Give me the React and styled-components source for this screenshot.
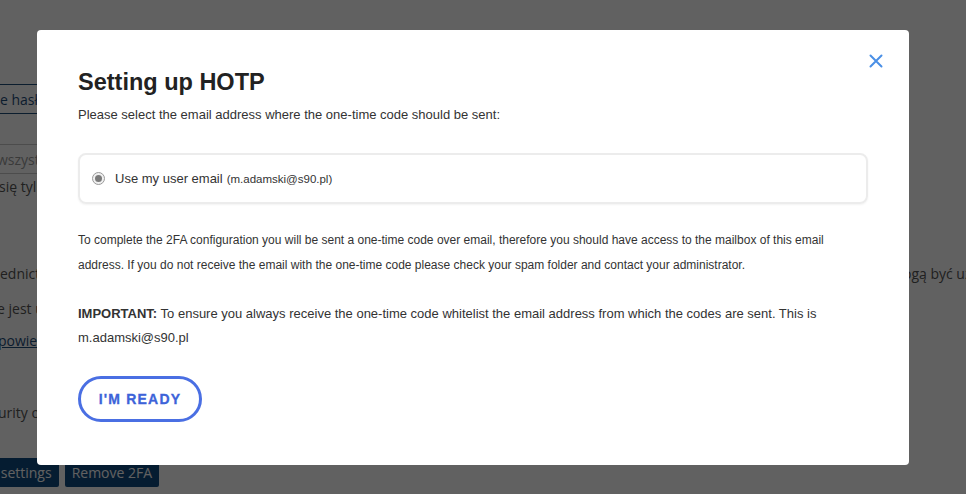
import styled, { createGlobalStyle } from "styled-components";

const GlobalStyle = createGlobalStyle`
  html, body {
    margin: 0;
    padding: 0;
    background: #ffffff;
    overflow: hidden;
  }
  * {
    box-sizing: border-box;
  }
`;

const Page = styled.div`
  width: 966px;
  height: 494px;
  overflow: hidden;
  padding-top: 84px;
  font-family: "Open Sans", "Liberation Sans", sans-serif;
  font-size: 14px;
  color: #555;
  display: flex;
  flex-direction: column;
  align-items: flex-start;
`;

const OutlineButton = styled.div`
  height: 30px;
  margin-left: -20px;
  padding: 0 14px 0 19px;
  border: 1px solid #1f4d7a;
  color: #1f4d7a;
  display: flex;
  align-items: center;
`;

const SearchInput = styled.div`
  width: 220px;
  height: 30px;
  margin-top: 30px;
  margin-left: -3px;
  border-top: 1px solid #c8c8c8;
  border-bottom: 1px solid #c8c8c8;
  color: #9a9a9a;
  display: flex;
  align-items: center;
`;

const PageLine = styled.div`
  width: 1040px;
  height: 20px;
  line-height: 20px;
  margin-top: ${(p) => p.$gap}px;
  margin-left: ${(p) => p.$shift || 0}px;
  white-space: nowrap;
  display: grid;
  grid-template-columns: 890px auto;
  text-decoration: ${(p) => (p.$link ? "underline" : "none")};
  color: ${(p) => (p.$link ? "#1f4d7a" : "#555")};
`;

const PageButtons = styled.div`
  display: flex;
  gap: 6px;
  margin-top: 35px;
  margin-left: -34px;
`;

const NavyButton = styled.div`
  height: 29px;
  padding: 0 7px;
  background: #0f4a82;
  color: #ffffff;
  font-size: 14px;
  border-radius: 2px;
  display: flex;
  align-items: center;
`;

const Overlay = styled.div`
  position: fixed;
  inset: 0;
  background: rgba(0, 0, 0, 0.62);
  padding: 30px 0 0 37px;
`;

const Modal = styled.div`
  position: relative;
  width: 872px;
  height: 435px;
  background: #ffffff;
  border-radius: 4px;
  padding: 39px 41px 0 41px;
  font-family: "Liberation Sans", Arial, sans-serif;
  color: #333;
  display: flex;
  flex-direction: column;
  align-items: flex-start;
`;

const Close = styled.button`
  position: absolute;
  top: 23px;
  right: 25px;
  width: 16px;
  height: 16px;
  padding: 0;
  border: 0;
  background: none;
  cursor: pointer;
  display: flex;
`;

const Title = styled.h2`
  margin: 0;
  font-size: 23.5px;
  line-height: 26px;
  font-weight: 700;
  color: #222;
`;

const Subtitle = styled.p`
  margin: 10px 0 0;
  font-size: 13px;
  line-height: 20px;
`;

const OptionCard = styled.label`
  margin-top: 28px;
  width: 100%;
  height: 51px;
  border: 2px solid #ececec;
  border-radius: 8px;
  box-shadow: 0 1px 2px rgba(0, 0, 0, 0.05);
  display: flex;
  align-items: center;
  padding-left: 12px;
  font-size: 13px;
`;

const Radio = styled.span`
  width: 13px;
  height: 13px;
  border-radius: 50%;
  border: 1px solid #9a9a9a;
  background: #f0f0f0;
  display: flex;
  align-items: center;
  justify-content: center;
  margin-right: 10px;

  &::after {
    content: "";
    width: 7px;
    height: 7px;
    border-radius: 50%;
    background: #7a7a7a;
  }
`;

const Small = styled.span`
  font-size: 11.5px;
  margin-left: 4px;
`;

const Paragraph = styled.p`
  margin: ${(p) => p.$gap}px 0 0;
  font-size: ${(p) => p.$size}px;
  line-height: ${(p) => p.$line}px;
  color: #333;
`;

const ReadyButton = styled.button`
  margin-top: 26px;
  width: 124px;
  height: 46px;
  border: 3px solid #4a6fe3;
  border-radius: 23px;
  background: #ffffff;
  color: #3d63d9;
  font-family: "Liberation Sans", Arial, sans-serif;
  font-size: 14px;
  font-weight: 900;
  letter-spacing: 1.2px;
  -webkit-text-stroke: 0.3px #3d63d9;
  cursor: pointer;
`;

export default function App() {
  return (
    <>
      <GlobalStyle />
      <Page>
        <OutlineButton>e hasło</OutlineButton>
        <SearchInput>wszystkie</SearchInput>
        <PageLine $gap={3} $shift={-1}>
          <span>się tylko</span>
        </PageLine>
        <PageLine $gap={67}>
          <span>ednictwem</span>
          <span>mogą być używane</span>
        </PageLine>
        <PageLine $gap={15} $shift={-3}>
          <span>e jest u</span>
        </PageLine>
        <PageLine $gap={12} $shift={-2} $link>
          <span>powiedź</span>
        </PageLine>
        <PageLine $gap={52} $shift={-2}>
          <span>urity options</span>
        </PageLine>
        <PageButtons>
          <NavyButton>2FA settings</NavyButton>
          <NavyButton>Remove 2FA</NavyButton>
        </PageButtons>
      </Page>
      <Overlay>
        <Modal>
          <Close aria-label="Close">
            <svg width="16" height="16" viewBox="0 0 16 16">
              <path d="M2.5 2.5 L13.5 13.5 M13.5 2.5 L2.5 13.5" stroke="#4a8fe6" strokeWidth="2" strokeLinecap="round" />
            </svg>
          </Close>
          <Title>Setting up HOTP</Title>
          <Subtitle>Please select the email address where the one-time code should be sent:</Subtitle>
          <OptionCard>
            <Radio />
            Use my user email
            <Small>(m.adamski@s90.pl)</Small>
          </OptionCard>
          <Paragraph $gap={24} $size={12} $line={25}>
            To complete the 2FA configuration you will be sent a one-time code over email, therefore you should have access to the mailbox of this email address. If you do not receive the email with the one-time code please check your spam folder and contact your administrator.
          </Paragraph>
          <Paragraph $gap={24} $size={13} $line={24}>
            <b>IMPORTANT:</b> To ensure you always receive the one-time code whitelist the email address from which the codes are sent. This is m.adamski@s90.pl
          </Paragraph>
          <ReadyButton>I'M READY</ReadyButton>
        </Modal>
      </Overlay>
    </>
  );
}
